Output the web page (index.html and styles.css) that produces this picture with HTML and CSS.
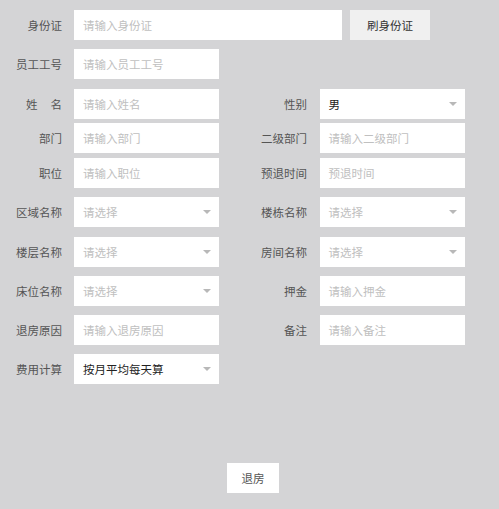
FILE: index.html
```html
<!DOCTYPE html>
<html lang="zh">
<head>
<meta charset="utf-8">
<link rel="stylesheet" href="styles.css">
</head>
<body>
<div class="form">
  <div class="row">
    <label class="lbl">身份证</label>
    <div class="box wide ph">请输入身份证</div>
    <div class="btn-read">刷身份证</div>
  </div>
  <div class="row">
    <label class="lbl">员工工号</label>
    <div class="box ph">请输入员工工号</div>
  </div>
  <div class="row">
    <label class="lbl">姓<span class="sp"></span>名</label>
    <div class="box ph">请输入姓名</div>
    <label class="lbl lbl2">性别</label>
    <div class="box box2 sel val">男<span class="arrow"></span></div>
  </div>
  <div class="row tight">
    <label class="lbl">部门</label>
    <div class="box ph">请输入部门</div>
    <label class="lbl lbl2">二级部门</label>
    <div class="box box2 ph">请输入二级部门</div>
  </div>
  <div class="row tight">
    <label class="lbl">职位</label>
    <div class="box ph">请输入职位</div>
    <label class="lbl lbl2">预退时间</label>
    <div class="box box2 ph">预退时间</div>
  </div>
  <div class="row">
    <label class="lbl">区域名称</label>
    <div class="box sel ph">请选择<span class="arrow"></span></div>
    <label class="lbl lbl2">楼栋名称</label>
    <div class="box box2 sel ph">请选择<span class="arrow"></span></div>
  </div>
  <div class="row">
    <label class="lbl">楼层名称</label>
    <div class="box sel ph">请选择<span class="arrow"></span></div>
    <label class="lbl lbl2">房间名称</label>
    <div class="box box2 sel ph">请选择<span class="arrow"></span></div>
  </div>
  <div class="row">
    <label class="lbl">床位名称</label>
    <div class="box sel ph">请选择<span class="arrow"></span></div>
    <label class="lbl lbl2">押金</label>
    <div class="box box2 ph">请输入押金</div>
  </div>
  <div class="row">
    <label class="lbl">退房原因</label>
    <div class="box ph">请输入退房原因</div>
    <label class="lbl lbl2">备注</label>
    <div class="box box2 ph">请输入备注</div>
  </div>
  <div class="row">
    <label class="lbl">费用计算</label>
    <div class="box sel val">按月平均每天算<span class="arrow"></span></div>
  </div>
  <div class="footer">
    <div class="btn-submit">退房</div>
  </div>
</div>
</body>
</html>
```
FILE: styles.css
```css
html, body {
  margin: 0;
  padding: 0;
  background: #d4d4d6;
}
body {
  width: 499px;
  height: 509px;
  overflow: hidden;
  font-family: "Noto Sans CJK SC", "Noto Sans", sans-serif;
  font-size: 11.5px;
}
.form {
  padding-top: 10px;
}
.row {
  display: flex;
  align-items: center;
  height: 30px;
  margin-bottom: 9.3px;
}
.row.tight {
  margin-top: -4.6px;
}
.lbl {
  width: 62px;
  margin-right: 12px;
  text-align: right;
  color: #555;
  white-space: nowrap;
  display: flex;
  justify-content: flex-end;
  align-items: center;
}
.sp {
  display: inline-block;
  width: 13px;
}
.lbl2 {
  width: 88px;
  margin-left: 0;
  margin-right: 12.5px;
}
.box {
  position: relative;
  box-sizing: border-box;
  width: 145px;
  height: 30px;
  background: #fff;
  padding-left: 9px;
  display: flex;
  align-items: center;
  white-space: nowrap;
}
.box2 {
  width: 145.5px;
}
.box.wide {
  width: 268px;
}
.ph {
  color: #c0c0c0;
}
.val {
  color: #222;
}
.arrow {
  position: absolute;
  right: 8px;
  top: 13px;
  width: 0;
  height: 0;
  border-left: 4px solid transparent;
  border-right: 4px solid transparent;
  border-top: 4px solid #b8b8b8;
}
.btn-read {
  margin-left: 8px;
  width: 80px;
  height: 30px;
  background: #f0f0f0;
  color: #333;
  display: flex;
  align-items: center;
  justify-content: center;
}
.footer {
  display: flex;
  padding-left: 227px;
  margin-top: 79px;
}
.btn-submit {
  width: 52px;
  height: 30px;
  background: #fff;
  color: #555;
  display: flex;
  align-items: center;
  justify-content: center;
}
```
